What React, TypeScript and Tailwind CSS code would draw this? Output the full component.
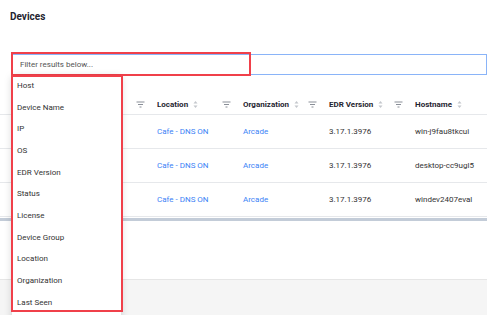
import React from "react";

const FilterIcon = () => (
  <svg width="9" height="7" viewBox="0 0 9 7" className="shrink-0">
    <path d="M0.5 1h8M2 3.5h5M3.5 6h2" stroke="#8a8f98" strokeWidth="1" />
  </svg>
);

const SortIcon = () => (
  <svg width="5" height="9" viewBox="0 0 5 9" className="shrink-0">
    <path d="M0.5 3.5L2.5 1l2 2.5z" fill="#c4c7cc" />
    <path d="M0.5 5.5L2.5 8l2-2.5z" fill="#c4c7cc" />
  </svg>
);

const columns = ["Location", "Organization", "EDR Version", "Hostname"];

const rows = [
  { loc: "Cafe - DNS ON", org: "Arcade", edr: "3.17.1.3976", host: "win-j9fau8tkcui" },
  { loc: "Cafe - DNS ON", org: "Arcade", edr: "3.17.1.3976", host: "desktop-cc9ugl5" },
  { loc: "Cafe - DNS ON", org: "Arcade", edr: "3.17.1.3976", host: "windev2407eval" },
];

const options = [
  "Host",
  "Device Name",
  "IP",
  "OS",
  "EDR Version",
  "Status",
  "License",
  "Device Group",
  "Location",
  "Organization",
  "Last Seen",
];

export default function App() {
  return (
    <div
      className="relative w-[487px] h-[315px] overflow-hidden bg-white text-[8px] text-[#333]"
      style={{ fontFamily: "Roboto, 'Liberation Sans', sans-serif" }}
    >
      <div className="flex flex-col h-[279px]">
        {/* Title */}
        <h1 className="pl-[10px] pt-[10px] text-[10px] font-bold text-[#1f2430] leading-[14px]">
          Devices
        </h1>

        {/* Filter input */}
        <div className="mt-[30px] ml-[11px] h-[21px] border border-[#8ab4f8] flex items-center pl-[8px] text-[#555]">
          Filter results below...
        </div>

        {/* Table */}
        <div className="mt-[13px]">
          <div className="flex h-[27px] pt-[7px] items-center border-b border-[#e6e8eb]">
            <div className="w-[149px] flex justify-end pr-[4px]">
              <FilterIcon />
            </div>
            {columns.map((c, i) => (
              <div
                key={c}
                className={`flex items-center pl-[8px] ${i === 3 ? "flex-1" : "w-[86px] pr-[4px]"}`}
              >
                <span className="font-bold text-[#1f2430]">{c}</span>
                <span className="ml-[5px]">
                  <SortIcon />
                </span>
                {i < 3 && (
                  <span className="ml-auto">
                    <FilterIcon />
                  </span>
                )}
              </div>
            ))}
          </div>
          {rows.map((r, i) => (
            <div key={i} className="flex h-[34px] items-center border-b border-[#e6e8eb]">
              <div className="w-[149px]" />
              <div className="w-[86px] pl-[8px] text-[#3b82f6]">{r.loc}</div>
              <div className="w-[86px] pl-[8px] text-[#3b82f6]">{r.org}</div>
              <div className="w-[86px] pl-[8px]">{r.edr}</div>
              <div className="flex-1 pl-[8px]">{r.host}</div>
            </div>
          ))}
          <div className="h-[3px] mt-[1px] bg-[#c3ccd8]" />
        </div>
      </div>

      {/* Footer area */}
      <div className="h-[36px] border-t border-[#e6e6e6] bg-[#f5f5f5]" />

      {/* Annotation around the input */}
      <div className="absolute left-[11px] top-[52px] w-[240px] h-[24px] border-2 border-[#f0404a]" />

      {/* Dropdown */}
      <div className="absolute left-[12px] top-[75px] w-[109px] h-[245px] bg-white shadow-[0_2px_8px_rgba(0,0,0,0.18)]">
        {options.map((o) => (
          <div key={o} className="h-[21.7px] flex items-center pl-[5px] text-[#333]">
            {o}
          </div>
        ))}
      </div>
      <div className="absolute left-[11px] top-[75px] w-[112px] h-[237px] border-2 border-[#f0404a]" />
    </div>
  );
}
